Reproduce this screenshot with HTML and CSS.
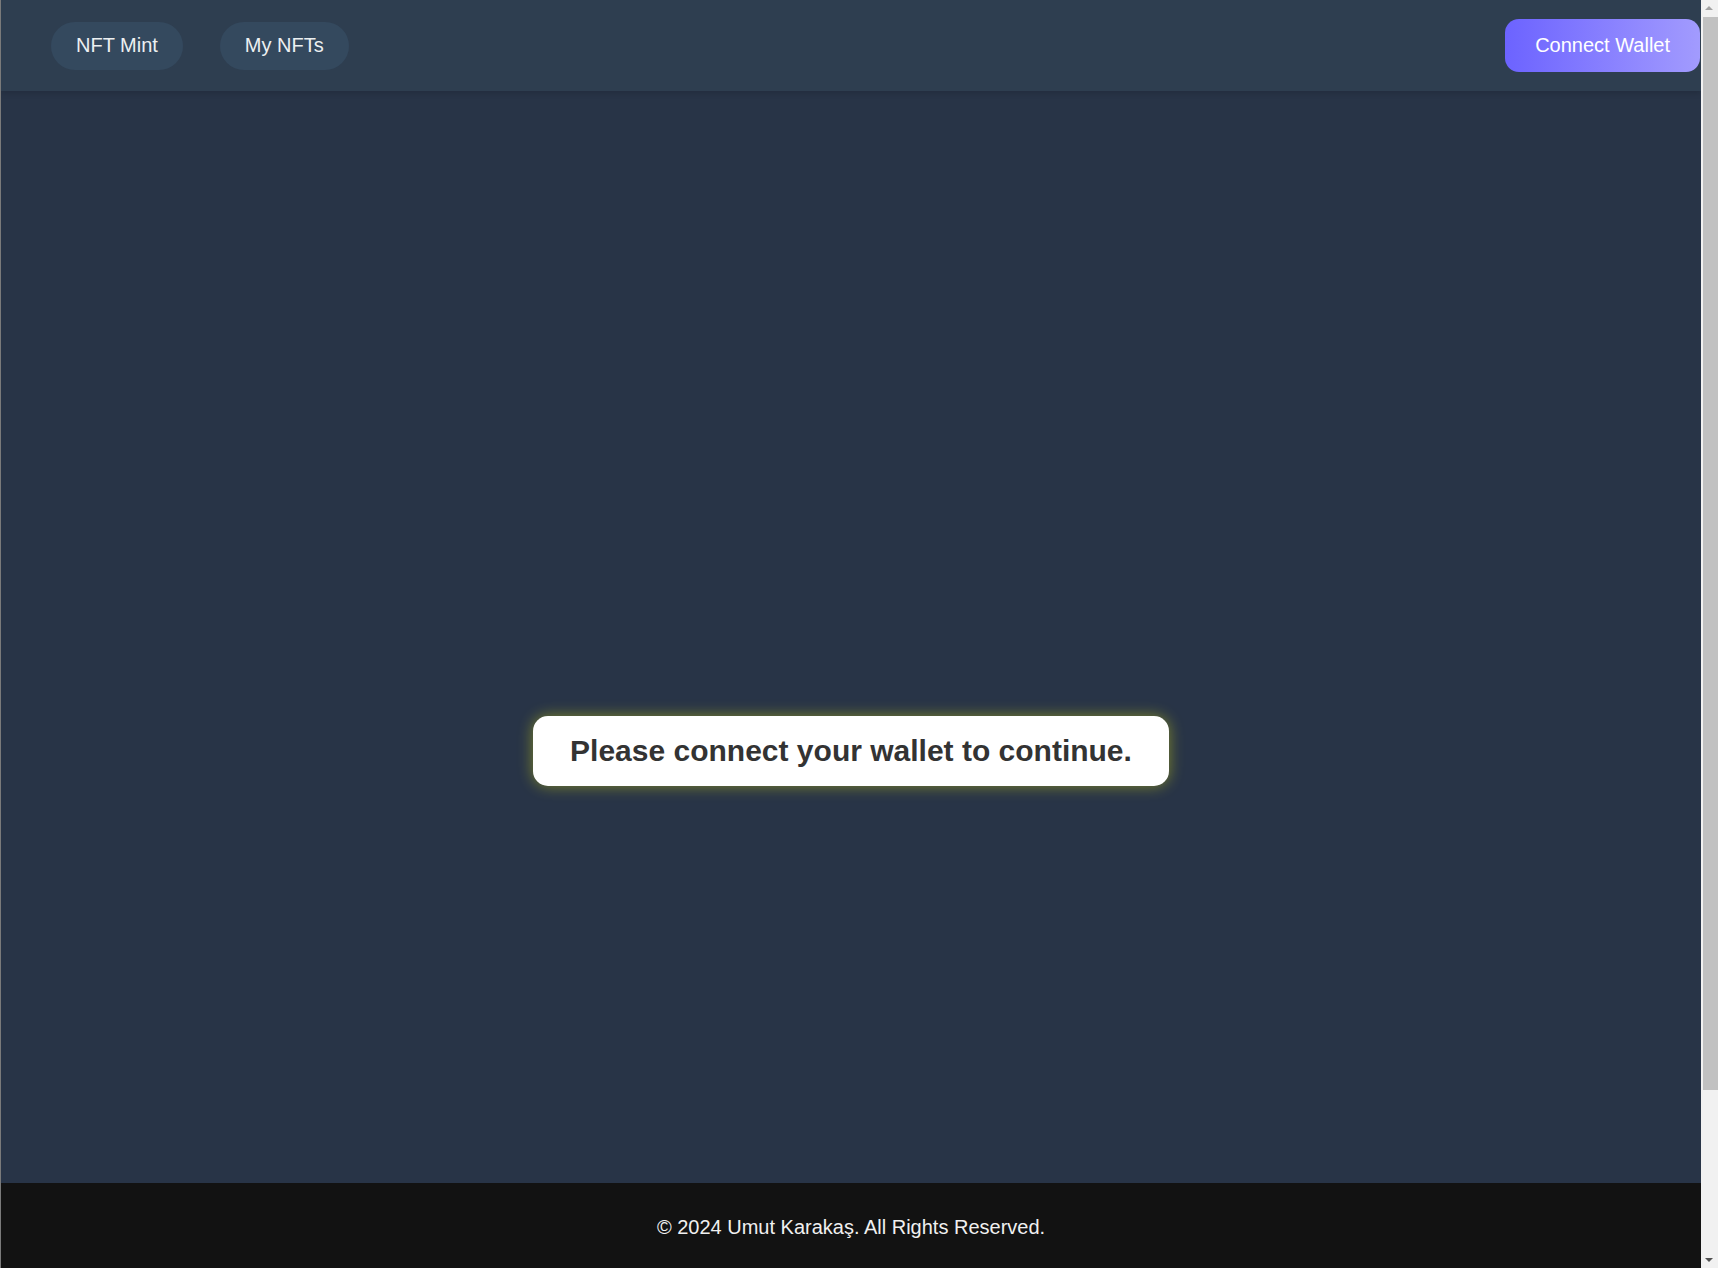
FILE: index.html
```html
<!DOCTYPE html>
<html lang="en">
<head>
<meta charset="utf-8">
<title>NFT Mint</title>
<link rel="stylesheet" href="styles.css">
</head>
<body>
<header class="topbar">
  <nav class="nav">
    <a class="nav-pill" href="#">NFT Mint</a>
    <a class="nav-pill" href="#">My NFTs</a>
  </nav>
  <button class="connect-btn" type="button">Connect Wallet</button>
</header>
<main class="main">
  <div class="notice">Please connect your wallet to continue.</div>
</main>
<footer class="footer">
  <p class="footer-text">© 2024 Umut Karakaş. All Rights Reserved.</p>
</footer>
<div class="scrollbar" aria-hidden="true">
  <span class="sb-arrow sb-up"></span>
  <span class="sb-thumb"></span>
  <span class="sb-arrow sb-down"></span>
</div>
</body>
</html>
```

FILE: styles.css
```css
html {
  background: #7a7a7a;
}
body {
  margin: 0 17px 0 1px;
  font-family: "Liberation Sans", Arial, sans-serif;
  background: #283447;
  color: #fff;
}
.topbar {
  height: 91px;
  box-sizing: border-box;
  background: #2e3e50;
  display: flex;
  align-items: center;
  justify-content: space-between;
  padding: 0 1px 0 50px;
  box-shadow: 0 2px 6px rgba(0, 0, 0, 0.15);
  position: relative;
}
.nav {
  display: flex;
  gap: 37px;
}
.nav-pill {
  display: block;
  background: #34495e;
  color: #ecf0f1;
  text-decoration: none;
  font-size: 20px;
  line-height: 23px;
  padding: 12.5px 25px;
  border-radius: 30px;
}
.connect-btn {
  font-family: "Liberation Sans", Arial, sans-serif;
  font-size: 20px;
  line-height: 23px;
  color: #fff;
  border: none;
  border-radius: 14px;
  padding: 15px 30px;
  background: linear-gradient(90deg, #6c63ff 0%, #a29bfe 100%);
  cursor: pointer;
}
.main {
  height: 1367px;
  box-sizing: border-box;
  padding-bottom: 48px;
  display: flex;
  align-items: center;
  justify-content: center;
}
.notice {
  background: #fff;
  color: #333;
  font-weight: bold;
  font-size: 30px;
  line-height: 34px;
  padding: 18px 37px;
  border-radius: 15px;
  box-shadow: 0 0 15px rgba(255, 255, 0, 0.4);
}
.footer {
  position: fixed;
  left: 1px;
  right: 17px;
  bottom: 0;
  height: 85px;
  box-sizing: border-box;
  padding-top: 4px;
  background: #121212;
  display: flex;
  align-items: center;
  justify-content: center;
}
.footer-text {
  margin: 0;
  font-size: 20px;
  color: #f0f0f0;
}
.scrollbar {
  position: fixed;
  top: 0;
  right: 0;
  bottom: 0;
  width: 17px;
  background: #f1f1f1;
  display: flex;
  flex-direction: column;
}
.sb-arrow {
  display: block;
  height: 17px;
  position: relative;
  flex: none;
}
.sb-arrow::after {
  content: "";
  position: absolute;
  left: 4px;
  width: 0;
  height: 0;
  border-left: 4.5px solid transparent;
  border-right: 4.5px solid transparent;
}
.sb-up::after {
  top: 6px;
  border-bottom: 4.5px solid #a3a3a3;
}
.sb-down {
  margin-top: auto;
}
.sb-down::after {
  top: 7px;
  border-top: 4.5px solid #505050;
}
.sb-thumb {
  display: block;
  height: 1073px;
  margin-left: 2px;
  background: #c1c1c1;
}
```
